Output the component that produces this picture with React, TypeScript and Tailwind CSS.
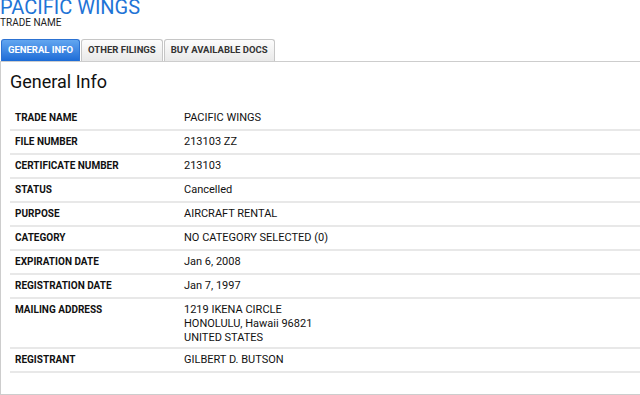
import React from "react";

const rows: { label: string; value: string[] }[] = [
  { label: "TRADE NAME", value: ["PACIFIC WINGS"] },
  { label: "FILE NUMBER", value: ["213103 ZZ"] },
  { label: "CERTIFICATE NUMBER", value: ["213103"] },
  { label: "STATUS", value: ["Cancelled"] },
  { label: "PURPOSE", value: ["AIRCRAFT RENTAL"] },
  { label: "CATEGORY", value: ["NO CATEGORY SELECTED (0)"] },
  { label: "EXPIRATION DATE", value: ["Jan 6, 2008"] },
  { label: "REGISTRATION DATE", value: ["Jan 7, 1997"] },
  { label: "MAILING ADDRESS", value: ["1219 IKENA CIRCLE", "HONOLULU, Hawaii 96821", "UNITED STATES"] },
  { label: "REGISTRANT", value: ["GILBERT D. BUTSON"] },
];

export default function App() {
  return (
    <div className="w-[640px] h-[395px] overflow-hidden bg-white font-['Roboto','Liberation_Sans',sans-serif]">
      <div className="-mt-[1px] h-[17px] text-[20px] leading-[17px] text-[#1f74d6]">PACIFIC WINGS</div>
      <div className="mt-[1px] text-[10px] leading-[12px] text-[#222]">TRADE NAME</div>
      <div className="mt-[10px] ml-[1px] flex items-end gap-[1px]">
        <div className="h-[22px] px-[6px] flex items-center rounded-t-[3px] border border-b-0 border-[#2c72d2] bg-gradient-to-b from-[#62a6f0] to-[#1b6bd6] text-[9.5px] font-bold text-white">
          GENERAL INFO
        </div>
        <div className="h-[22px] px-[6px] flex items-center rounded-t-[3px] border border-b-0 border-[#c6c6c6] bg-gradient-to-b from-[#fcfcfc] to-[#e9e9e9] text-[9.5px] font-bold text-[#333]">
          OTHER FILINGS
        </div>
        <div className="h-[22px] px-[6px] flex items-center rounded-t-[3px] border border-b-0 border-[#c6c6c6] bg-gradient-to-b from-[#fcfcfc] to-[#e9e9e9] text-[9.5px] font-bold text-[#333]">
          BUY AVAILABLE DOCS
        </div>
      </div>
      <div className="h-[334px] border-t border-l border-b border-[#cdcdcd] pl-[9px] pt-[9px]">
        <div className="text-[18px] leading-[22px] text-[#111]">General Info</div>
        <div className="mt-[14px]">
          {rows.map((r) => (
            <div key={r.label} className="flex border-b-2 border-[#e8e8e8]">
              <div className="w-[174px] shrink-0 pl-[5px] py-[5px] text-[10px] leading-[12px] font-bold text-[#111]">
                {r.label}
              </div>
              <div className="pt-[4px] pb-[2px] text-[11px] leading-[14px] text-[#111]">
                {r.value.map((v) => (
                  <div key={v}>{v}</div>
                ))}
              </div>
            </div>
          ))}
        </div>
      </div>
    </div>
  );
}
